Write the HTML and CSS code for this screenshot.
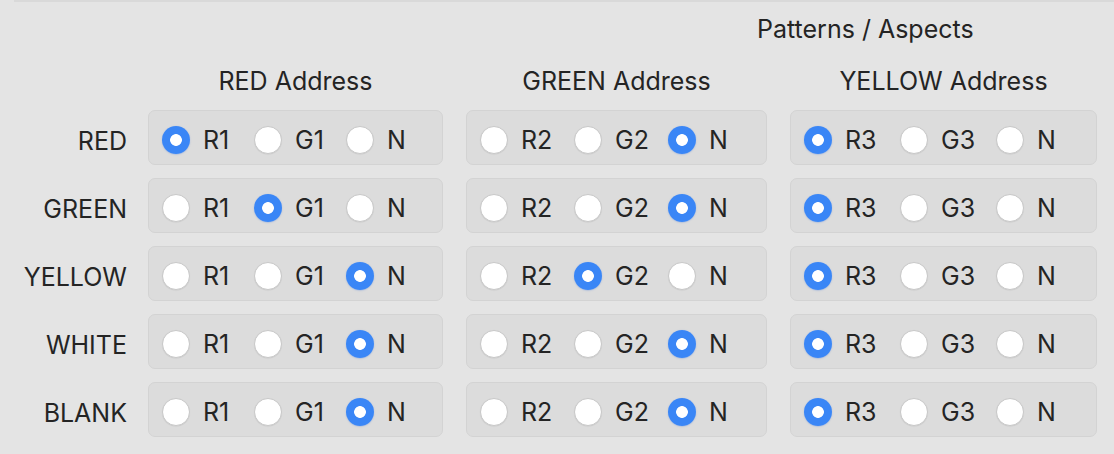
FILE: index.html
```html
<!DOCTYPE html>
<html>
<head>
<meta charset="utf-8">
<link rel="stylesheet" href="styles.css">
</head>
<body>
<div class="topline"></div>
<div class="title">Patterns / Aspects</div>
<div class="grid">
  <div class="corner"></div>
  <div class="colhead">RED Address</div>
  <div class="colhead">GREEN Address</div>
  <div class="colhead">YELLOW Address</div>

  <div class="rowlabel">RED</div>
  <div class="box col1"><label class="opt"><input type="radio" name="a1" checked><span>R1</span></label><label class="opt"><input type="radio" name="a1"><span>G1</span></label><label class="opt"><input type="radio" name="a1"><span>N</span></label></div>
  <div class="box col2"><label class="opt"><input type="radio" name="a2"><span>R2</span></label><label class="opt"><input type="radio" name="a2"><span>G2</span></label><label class="opt"><input type="radio" name="a2" checked><span>N</span></label></div>
  <div class="box col3"><label class="opt"><input type="radio" name="a3" checked><span>R3</span></label><label class="opt"><input type="radio" name="a3"><span>G3</span></label><label class="opt"><input type="radio" name="a3"><span>N</span></label></div>

  <div class="rowlabel">GREEN</div>
  <div class="box col1"><label class="opt"><input type="radio" name="b1"><span>R1</span></label><label class="opt"><input type="radio" name="b1" checked><span>G1</span></label><label class="opt"><input type="radio" name="b1"><span>N</span></label></div>
  <div class="box col2"><label class="opt"><input type="radio" name="b2"><span>R2</span></label><label class="opt"><input type="radio" name="b2"><span>G2</span></label><label class="opt"><input type="radio" name="b2" checked><span>N</span></label></div>
  <div class="box col3"><label class="opt"><input type="radio" name="b3" checked><span>R3</span></label><label class="opt"><input type="radio" name="b3"><span>G3</span></label><label class="opt"><input type="radio" name="b3"><span>N</span></label></div>

  <div class="rowlabel">YELLOW</div>
  <div class="box col1"><label class="opt"><input type="radio" name="c1"><span>R1</span></label><label class="opt"><input type="radio" name="c1"><span>G1</span></label><label class="opt"><input type="radio" name="c1" checked><span>N</span></label></div>
  <div class="box col2"><label class="opt"><input type="radio" name="c2"><span>R2</span></label><label class="opt"><input type="radio" name="c2" checked><span>G2</span></label><label class="opt"><input type="radio" name="c2"><span>N</span></label></div>
  <div class="box col3"><label class="opt"><input type="radio" name="c3" checked><span>R3</span></label><label class="opt"><input type="radio" name="c3"><span>G3</span></label><label class="opt"><input type="radio" name="c3"><span>N</span></label></div>

  <div class="rowlabel">WHITE</div>
  <div class="box col1"><label class="opt"><input type="radio" name="d1"><span>R1</span></label><label class="opt"><input type="radio" name="d1"><span>G1</span></label><label class="opt"><input type="radio" name="d1" checked><span>N</span></label></div>
  <div class="box col2"><label class="opt"><input type="radio" name="d2"><span>R2</span></label><label class="opt"><input type="radio" name="d2"><span>G2</span></label><label class="opt"><input type="radio" name="d2" checked><span>N</span></label></div>
  <div class="box col3"><label class="opt"><input type="radio" name="d3" checked><span>R3</span></label><label class="opt"><input type="radio" name="d3"><span>G3</span></label><label class="opt"><input type="radio" name="d3"><span>N</span></label></div>

  <div class="rowlabel">BLANK</div>
  <div class="box col1"><label class="opt"><input type="radio" name="e1"><span>R1</span></label><label class="opt"><input type="radio" name="e1"><span>G1</span></label><label class="opt"><input type="radio" name="e1" checked><span>N</span></label></div>
  <div class="box col2"><label class="opt"><input type="radio" name="e2"><span>R2</span></label><label class="opt"><input type="radio" name="e2"><span>G2</span></label><label class="opt"><input type="radio" name="e2" checked><span>N</span></label></div>
  <div class="box col3"><label class="opt"><input type="radio" name="e3" checked><span>R3</span></label><label class="opt"><input type="radio" name="e3"><span>G3</span></label><label class="opt"><input type="radio" name="e3"><span>N</span></label></div>
</div>
</body>
</html>
```
FILE: styles.css
```css
html, body {
  margin: 0;
  padding: 0;
  background: #e4e4e4;
}
body {
  font-family: Inter, "Liberation Sans", sans-serif;
  font-size: 25px;
  color: #242424;
  overflow: hidden;
}
.topline {
  height: 2px;
  margin-left: 14px;
  background: #d9d9d9;
}
.title {
  margin-left: 757px;
  margin-top: 12px;
  line-height: 30px;
  height: 30px;
  white-space: nowrap;
}
.grid {
  display: grid;
  grid-template-columns: 125px repeat(3, max-content);
  column-gap: 23px;
  row-gap: 13px;
  justify-content: start;
  margin-top: 22px;
}
.colhead {
  text-align: center;
  line-height: 30px;
  height: 30px;
  margin-bottom: 1px;
  white-space: nowrap;
}
.rowlabel {
  margin-right: -2px;
  display: flex;
  align-items: center;
  justify-content: flex-end;
  padding-top: 6px;
  white-space: nowrap;
}
.box {
  box-sizing: border-box;
  height: 55px;
  display: grid;
  align-items: center;
  padding: 5px 4px 0 13px;
  background: #dcdcdc;
  border: 1px solid #d3d3d3;
  border-radius: 7px;
}
.box.col1 { grid-template-columns: repeat(3, 92px); }
.box.col2 { grid-template-columns: repeat(3, 94px); }
.box.col3 { grid-template-columns: repeat(3, 96px); }
.opt {
  display: flex;
  align-items: center;
  gap: 13px;
  white-space: nowrap;
}
.opt input {
  appearance: none;
  -webkit-appearance: none;
  margin: 0;
  width: 28px;
  height: 28px;
  flex: none;
  border-radius: 50%;
  background: #ffffff;
  border: 1px solid #c8c8c8;
  box-shadow: 0 0.5px 1px rgba(0, 0, 0, 0.08);
  box-sizing: border-box;
}
.opt input:checked {
  border: none;
  background: radial-gradient(circle at center, #ffffff 0 5.5px, #3a86f6 6.2px);
  box-shadow: 0 0.5px 1.5px rgba(40, 100, 220, 0.35);
}
```
